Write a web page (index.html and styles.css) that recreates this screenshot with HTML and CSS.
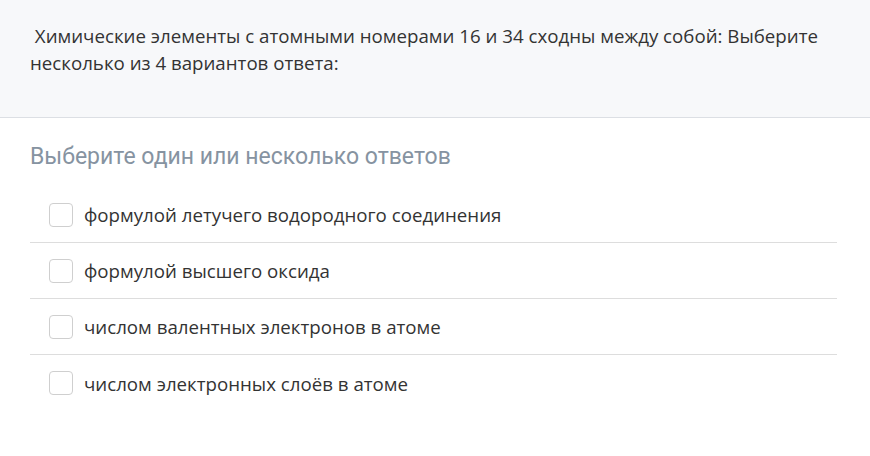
FILE: index.html
```html
<!DOCTYPE html>
<html lang="ru">
<head>
    <meta charset="UTF-8">
    <meta name="viewport" content="width=device-width, initial-scale=1.0">
    <title>Вопрос</title>
    <link rel="stylesheet" href="styles.css">
</head>
<body>
    <div class="question">
        <p class="question-text">&nbsp;Химические элементы с атомными номерами 16 и 34 сходны между собой: Выберите несколько из 4 вариантов ответа:</p>
    </div>

    <div class="answers">
        <h2 class="answers-title">Выберите один или несколько ответов</h2>
        <ul class="options">
            <li class="option"><label><span class="box"></span>формулой летучего водородного соединения</label></li>
            <li class="option"><label><span class="box"></span>формулой высшего оксида</label></li>
            <li class="option"><label><span class="box"></span>числом валентных электронов в атоме</label></li>
            <li class="option"><label><span class="box"></span>числом электронных слоёв в атоме</label></li>
        </ul>
    </div>
</body>
</html>
```

FILE: styles.css
```css
body {
    margin: 0;
    background: #fff;
    font-family: 'Open Sans', 'Noto Sans', sans-serif;
    color: #333;
}

.question {
    background: #f7f8fa;
    border-bottom: 1px solid #dcdfe4;
    height: 118px;
    box-sizing: border-box;
    padding: 22px 30px 0;
}

.question-text {
    margin: 0;
    font-size: 18.7px;
    line-height: 27px;
    color: #333;
}

.answers {
    padding: 25px 33px 0 30px;
}

.answers-title {
    margin: 0 0 16px;
    font-family: Roboto, 'Noto Sans', sans-serif;
    font-size: 23px;
    font-weight: 400;
    line-height: 28px;
    color: #8693a1;
}

.options {
    list-style: none;
    margin: 0;
    padding: 0;
}

.option {
    height: 56px;
    border-bottom: 1px solid #dddddd;
    box-sizing: border-box;
}

.option:last-child {
    border-bottom: none;
}

.option label {
    display: flex;
    align-items: center;
    height: 100%;
    padding-left: 19px;
    font-size: 18.7px;
    color: #333;
    cursor: pointer;
}

.box {
    width: 24px;
    height: 24px;
    box-sizing: border-box;
    border: 1px solid #cfcfcf;
    border-radius: 4px;
    background: #fff;
    margin-right: 11px;
    flex-shrink: 0;
}
```
